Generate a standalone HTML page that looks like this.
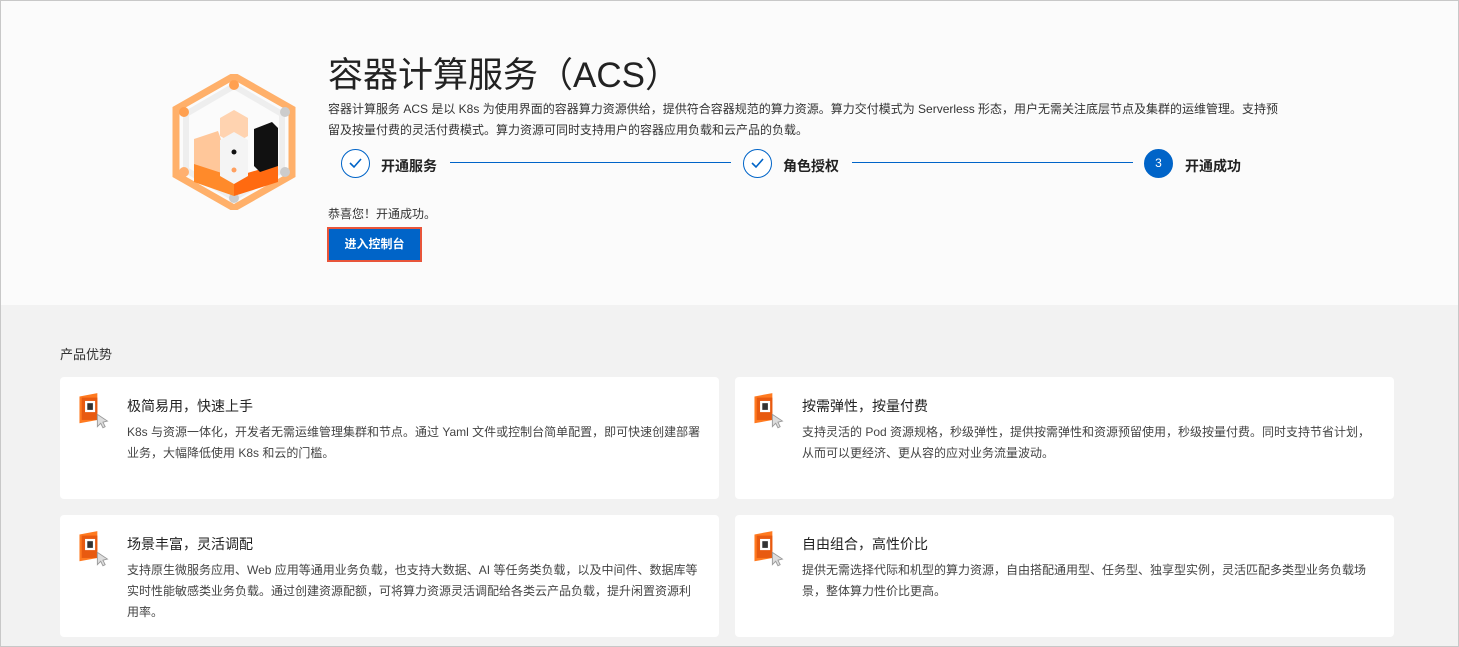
<!DOCTYPE html>
<html><head><meta charset="utf-8"><style>
*{margin:0;padding:0;box-sizing:border-box}
body{width:1459px;height:647px;overflow:hidden;font-family:"Liberation Sans","Noto Sans CJK SC",sans-serif;color:#333;background:#f2f2f2;position:relative}
.border{position:absolute;left:0;top:0;width:1459px;height:647px;border:1px solid #c8c8c8;z-index:5;pointer-events:none}
.top{position:absolute;left:0;top:0;width:1459px;height:305px;background:#fbfbfb}
.abs{position:absolute}
h1{position:absolute;left:328px;top:47px;font-size:35px;font-weight:400;color:#222}
.desc{left:328px;top:99px;width:960px;font-size:12px;line-height:21px;color:#333}
.step{font-size:14px;font-weight:bold;color:#222}
.circ{width:29px;height:29px;border-radius:50%;border:1.5px solid #0064c8;background:#fff}
.line{height:1px;background:#0064c8;top:162px}
.btn{left:327px;top:227px;width:95px;height:35px;border:2px solid #e8553a;background:#0064c8;color:#fff;font-size:12px;font-weight:bold;text-align:center;line-height:31px}
.card{position:absolute;background:#fff;border-radius:4px;width:659px;height:122px}
.card .t{position:absolute;left:67px;top:19px;font-size:14px;color:#222}
.card .d{position:absolute;left:67px;top:45px;width:572px;font-size:12px;line-height:21px;color:#444}
.ic{position:absolute;left:16px;top:15px;width:36px;height:38px}
</style></head><body>
<div class="border"></div>
<div class="top"></div>
<svg class="abs" style="left:172px;top:74px" width="124" height="136" viewBox="0 0 124 136">
<polygon points="62,2 120,35 120,101 62,134 4,101 4,35" fill="none" stroke="#ffb06a" stroke-width="7"/>
<polygon points="62,12 110,40 110,96 62,124 14,96 14,40" fill="none" stroke="#eee" stroke-width="6"/>
<circle cx="62" cy="11" r="5" fill="#ffa050"/><circle cx="12" cy="38" r="5" fill="#ffa050"/><circle cx="12" cy="98" r="5" fill="#ffb070"/>
<circle cx="113" cy="38" r="5" fill="#ccc"/><circle cx="113" cy="98" r="5" fill="#ccc"/><circle cx="62" cy="124" r="5" fill="#ccc"/>
<polygon points="62,36 76,44 76,62 62,70 48,62 48,44" fill="#ffd3b0"/>
<polygon points="22,65 46,57 52,74 52,100 22,92" fill="#ffc79a"/>
<polygon points="22,90 62,103 62,122 22,108" fill="#ff8a2a"/>
<polygon points="62,103 106,90 106,108 62,122" fill="#ff6a10"/>
<polygon points="82,55 100,48 106,54 106,92 88,98 82,92" fill="#111"/>
<polygon points="48,66 62,58 76,66 76,102 62,110 48,102" fill="#f4f4f4"/>
<circle cx="62" cy="78" r="2.5" fill="#111"/><circle cx="62" cy="96" r="2.5" fill="#ffa060"/>
</svg>
<h1>容器计算服务（ACS）</h1>
<div class="abs desc">容器计算服务 ACS 是以 K8s 为使用界面的容器算力资源供给，提供符合容器规范的算力资源。算力交付模式为 Serverless 形态，用户无需关注底层节点及集群的运维管理。支持预留及按量付费的灵活付费模式。算力资源可同时支持用户的容器应用负载和云产品的负载。</div>
<div class="abs circ" style="left:341px;top:149px"><svg width="26" height="26" viewBox="0 0 26 26"><path d="M8 13l4 4 7-8" fill="none" stroke="#0064c8" stroke-width="1.6"/></svg></div>
<div class="abs step" style="left:381px;top:156px">开通服务</div>
<div class="abs line" style="left:450px;width:281px"></div>
<div class="abs circ" style="left:743px;top:149px"><svg width="26" height="26" viewBox="0 0 26 26"><path d="M8 13l4 4 7-8" fill="none" stroke="#0064c8" stroke-width="1.6"/></svg></div>
<div class="abs step" style="left:783px;top:156px">角色授权</div>
<div class="abs line" style="left:852px;width:281px"></div>
<div class="abs circ" style="left:1144px;top:149px;background:#0064c8;color:#fff;font-size:12px;text-align:center;line-height:26px">3</div>
<div class="abs step" style="left:1185px;top:156px">开通成功</div>
<div class="abs" style="left:328px;top:205px;font-size:12px">恭喜您！开通成功。</div>
<div class="abs btn">进入控制台</div>
<div class="abs" style="left:60px;top:344px;font-size:13px;color:#333">产品优势</div>
<div class="card" style="left:60px;top:377px"><svg class="ic" viewBox="0 0 32 34"><path d="M3 4l16-3v24l-16 3z" fill="#ff7a20"/><rect x="5" y="5" width="14" height="20" fill="#e85a10"/><rect x="8" y="8" width="9" height="10" fill="#fff"/><rect x="10" y="10" width="5" height="6" fill="#333"/><path d="M19 20l9 6-4 1 2 4-2 1-2-4-3 3z" fill="#ddd" stroke="#999" stroke-width=".8"/></svg><div class="t">极简易用，快速上手</div><div class="d" style="width:585px">K8s 与资源一体化，开发者无需运维管理集群和节点。通过 Yaml 文件或控制台简单配置，即可快速创建部署业务，大幅降低使用 K8s 和云的门槛。</div></div>
<div class="card" style="left:735px;top:377px"><svg class="ic" viewBox="0 0 32 34"><path d="M3 4l16-3v24l-16 3z" fill="#ff7a20"/><rect x="5" y="5" width="14" height="20" fill="#e85a10"/><rect x="8" y="8" width="9" height="10" fill="#fff"/><rect x="10" y="10" width="5" height="6" fill="#333"/><path d="M19 20l9 6-4 1 2 4-2 1-2-4-3 3z" fill="#ddd" stroke="#999" stroke-width=".8"/></svg><div class="t">按需弹性，按量付费</div><div class="d">支持灵活的 Pod 资源规格，秒级弹性，提供按需弹性和资源预留使用，秒级按量付费。同时支持节省计划，从而可以更经济、更从容的应对业务流量波动。</div></div>
<div class="card" style="left:60px;top:515px"><svg class="ic" viewBox="0 0 32 34"><path d="M3 4l16-3v24l-16 3z" fill="#ff7a20"/><rect x="5" y="5" width="14" height="20" fill="#e85a10"/><rect x="8" y="8" width="9" height="10" fill="#fff"/><rect x="10" y="10" width="5" height="6" fill="#333"/><path d="M19 20l9 6-4 1 2 4-2 1-2-4-3 3z" fill="#ddd" stroke="#999" stroke-width=".8"/></svg><div class="t">场景丰富，灵活调配</div><div class="d">支持原生微服务应用、Web 应用等通用业务负载，也支持大数据、AI 等任务类负载，以及中间件、数据库等实时性能敏感类业务负载。通过创建资源配额，可将算力资源灵活调配给各类云产品负载，提升闲置资源利用率。</div></div>
<div class="card" style="left:735px;top:515px"><svg class="ic" viewBox="0 0 32 34"><path d="M3 4l16-3v24l-16 3z" fill="#ff7a20"/><rect x="5" y="5" width="14" height="20" fill="#e85a10"/><rect x="8" y="8" width="9" height="10" fill="#fff"/><rect x="10" y="10" width="5" height="6" fill="#333"/><path d="M19 20l9 6-4 1 2 4-2 1-2-4-3 3z" fill="#ddd" stroke="#999" stroke-width=".8"/></svg><div class="t">自由组合，高性价比</div><div class="d">提供无需选择代际和机型的算力资源，自由搭配通用型、任务型、独享型实例，灵活匹配多类型业务负载场景，整体算力性价比更高。</div></div>
</body></html>
